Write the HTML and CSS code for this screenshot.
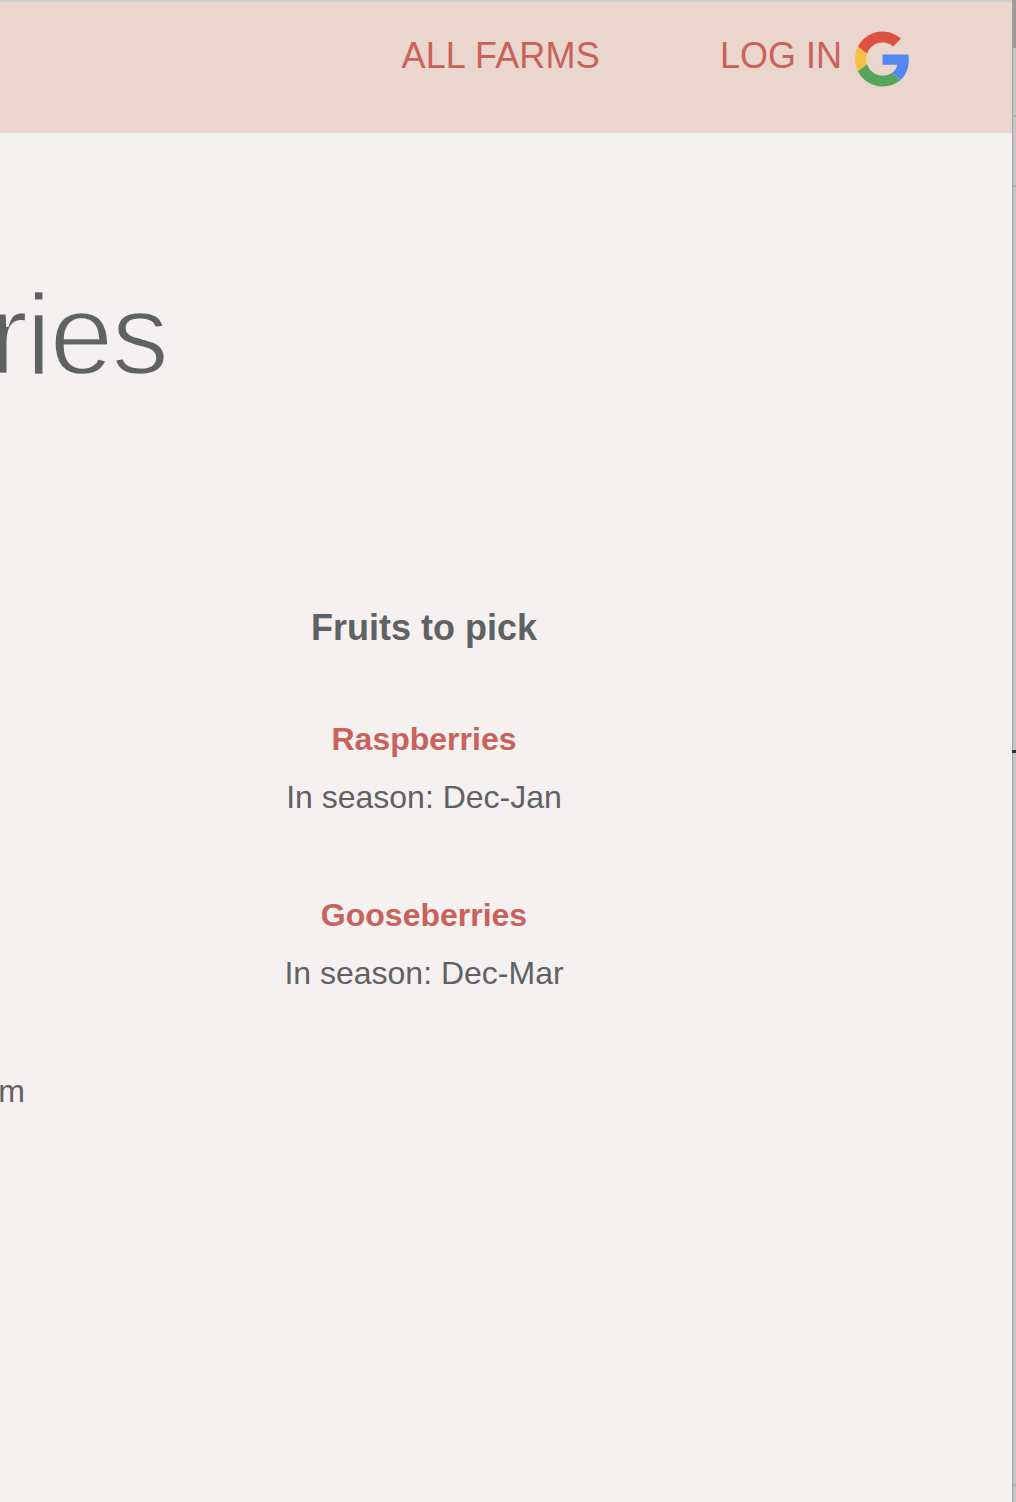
FILE: index.html
```html
<!DOCTYPE html>
<html lang="en">
<head>
    <meta charset="UTF-8">
    <meta name="viewport" content="width=device-width, initial-scale=1.0">
    <title>Berries</title>
    <link rel="stylesheet" href="styles.css">
</head>
<body>
    <div class="window">
        <div class="page">
            <!-- Шапка -->
            <header class="header">
                <a class="nav-link all-farms">ALL FARMS</a>
                <a class="nav-link login">LOG IN</a>
                <svg class="google" viewBox="0 0 48 48">
                    <path fill="#dd5244" d="M24 9.5c3.54 0 6.71 1.22 9.21 3.6l6.85-6.85C35.9 2.38 30.47 0 24 0 14.62 0 6.51 5.38 2.56 13.22l7.98 6.19C12.43 13.72 17.74 9.5 24 9.5z"/>
                    <path fill="#5286f0" d="M46.98 24.55c0-1.57-.15-3.09-.38-4.55H24v9.02h12.94c-.58 2.96-2.26 5.48-4.78 7.18l7.73 6c4.51-4.18 7.09-10.36 7.09-17.65z"/>
                    <path fill="#f5c142" d="M10.53 28.59c-.48-1.45-.76-2.99-.76-4.59s.27-3.14.76-4.59l-7.98-6.19C.92 16.46 0 20.12 0 24c0 3.88.92 7.54 2.56 10.78l7.97-6.19z"/>
                    <path fill="#58a65c" d="M24 48c6.48 0 11.93-2.13 15.89-5.81l-7.73-6c-2.15 1.45-4.92 2.3-8.16 2.3-6.26 0-11.57-4.22-13.47-9.91l-7.98 6.19C6.51 42.62 14.62 48 24 48z"/>
                </svg>
            </header>

            <div class="title-box">
                <h1 class="title">Berries</h1>
            </div>

            <div class="columns">
                <div class="side">
                    <p class="side-text">farm</p>
                </div>
                <section class="fruits">
                    <h2 class="fruits-title">Fruits to pick</h2>
                    <div class="fruit">
                        <h3 class="fruit-name">Raspberries</h3>
                        <p class="fruit-season">In season: Dec-Jan</p>
                    </div>
                    <div class="fruit">
                        <h3 class="fruit-name">Gooseberries</h3>
                        <p class="fruit-season">In season: Dec-Mar</p>
                    </div>
                </section>
            </div>
        </div>
        <div class="edge">
            <div class="edge-top"></div>
            <div class="edge-tick"></div>
        </div>
    </div>
</body>
</html>
```

FILE: styles.css
```css
html, body {
    margin: 0;
    height: 100%;
    overflow: hidden;
}
body {
    background: #f5f1f0;
    color: #5f6263;
    font-family: "Liberation Sans", Arial, sans-serif;
}
.window {
    display: flex;
    height: 1502px;
}
.page {
    flex: 1;
    min-width: 0;
}
.edge {
    width: 3px;
    border-left: 1px solid #a5a4a4;
    background:
        linear-gradient(#b3b2b2, #b3b2b2) 0 115px / 100% 2px no-repeat,
        linear-gradient(#b3b2b2, #b3b2b2) 0 185px / 100% 2px no-repeat,
        linear-gradient(#b3b2b2, #b3b2b2) 0 1484px / 100% 2px no-repeat,
        #c6c5c5;
}
.edge-top {
    height: 48px;
    background: #9c9a9a;
}
.edge-tick {
    height: 3px;
    margin: 702px 0 0 -1px;
    background: #333;
}
.header {
    display: flex;
    align-items: center;
    justify-content: flex-end;
    height: 131px;
    padding-right: 102px;
    background: #ebd6cd;
    border-top: 2px solid #cfcdcc;
}
.nav-link {
    color: #c8625a;
    font-size: 36px;
    margin-top: -24px;
}
.all-farms {
    margin-right: 120px;
    letter-spacing: 0.2px;
}
.google {
    width: 55px;
    height: 56px;
    margin-left: 13px;
    margin-top: -17px;
}
.title-box {
    display: flex;
    justify-content: flex-end;
    width: 167px;
    padding-top: 133px;
    white-space: nowrap;
}
/* обводка цветом фона делает буквы тоньше */
.title {
    margin: 0;
    font-size: 115px;
    font-weight: 400;
    line-height: 136px;
    letter-spacing: -2px;
    -webkit-text-stroke: 2.5px #f5f1f0;
}
.columns {
    display: flex;
    padding-top: 203px;
}
.side {
    display: flex;
    justify-content: flex-end;
    width: 25px;
    flex-shrink: 0;
    white-space: nowrap;
}
.side-text {
    margin: 466px 0 0;
    font-size: 32px;
    line-height: 40px;
}
.fruits {
    width: 800px;
    text-align: center;
    margin-left: -1px;
}
.fruits-title {
    margin: 0;
    font-size: 36px;
    line-height: 46px;
}
.fruit {
    margin-top: 68px;
    margin-bottom: 78px;
}
.fruit-name {
    margin: 0;
    color: #c8625a;
    font-size: 32px;
    line-height: 40px;
}
.fruit-season {
    margin: 18px 0 0;
    font-size: 32px;
    line-height: 40px;
}
```
